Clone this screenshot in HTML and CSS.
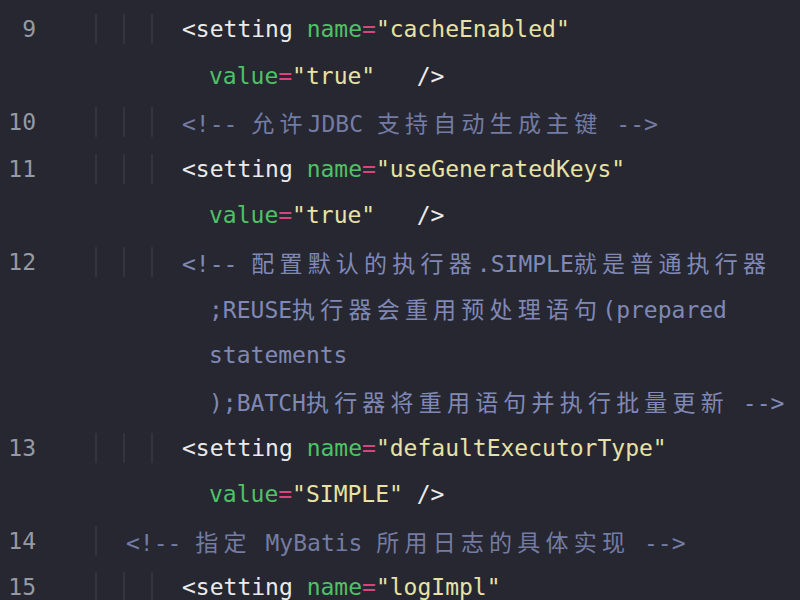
FILE: index.html
```html
<!DOCTYPE html>
<html lang="zh-CN">
<head>
<meta charset="utf-8">
<title>mybatis-config.xml</title>
<link rel="stylesheet" href="styles.css">
</head>
<body>
<div class="editor">
  <div class="row"><span class="ln">9</span><span class="indent"><i class="g"></i><i class="g"></i><i class="g"></i></span><span class="code"><span class="tag">&lt;setting</span> <span class="attr">name</span><span class="eq">=</span><span class="str">"cacheEnabled"</span></span></div>
  <div class="row"><span class="ln"></span><span class="indent"><i class="g off"></i><i class="g off"></i><i class="g off"></i></span><span class="code cont"><span class="attr">value</span><span class="eq">=</span><span class="str">"true"</span>   <span class="tag">/&gt;</span></span></div>
  <div class="row"><span class="ln">10</span><span class="indent"><i class="g"></i><i class="g"></i><i class="g"></i></span><span class="code cmt">&lt;!-- <span class="cjk">允许</span>JDBC <span class="cjk">支持自动生成主键</span> --&gt;</span></div>
  <div class="row"><span class="ln">11</span><span class="indent"><i class="g"></i><i class="g"></i><i class="g"></i></span><span class="code"><span class="tag">&lt;setting</span> <span class="attr">name</span><span class="eq">=</span><span class="str">"useGeneratedKeys"</span></span></div>
  <div class="row"><span class="ln"></span><span class="indent"><i class="g off"></i><i class="g off"></i><i class="g off"></i></span><span class="code cont"><span class="attr">value</span><span class="eq">=</span><span class="str">"true"</span>   <span class="tag">/&gt;</span></span></div>
  <div class="row"><span class="ln">12</span><span class="indent"><i class="g"></i><i class="g"></i><i class="g"></i></span><span class="code cmt bright">&lt;!-- <span class="cjk">配置默认的执行器</span>.SIMPLE<span class="cjk">就是普通执行器</span></span></div>
  <div class="row"><span class="ln"></span><span class="indent"><i class="g off"></i><i class="g off"></i><i class="g off"></i></span><span class="code cont cmt bright">;REUSE<span class="cjk">执行器会重用预处理语句</span>(prepared</span></div>
  <div class="row"><span class="ln"></span><span class="indent"><i class="g off"></i><i class="g off"></i><i class="g off"></i></span><span class="code cont cmt bright">statements</span></div>
  <div class="row"><span class="ln"></span><span class="indent"><i class="g off"></i><i class="g off"></i><i class="g off"></i></span><span class="code cont cmt bright">);BATCH<span class="cjk">执行器将重用语句并执行批量更新</span> --&gt;</span></div>
  <div class="row"><span class="ln">13</span><span class="indent"><i class="g"></i><i class="g"></i><i class="g"></i></span><span class="code"><span class="tag">&lt;setting</span> <span class="attr">name</span><span class="eq">=</span><span class="str">"defaultExecutorType"</span></span></div>
  <div class="row"><span class="ln"></span><span class="indent"><i class="g off"></i><i class="g off"></i><i class="g off"></i></span><span class="code cont"><span class="attr">value</span><span class="eq">=</span><span class="str">"SIMPLE"</span> <span class="tag">/&gt;</span></span></div>
  <div class="row"><span class="ln">14</span><span class="indent"><i class="g"></i></span><span class="code cmt">&lt;!-- <span class="cjk">指定</span> MyBatis <span class="cjk">所用日志的具体实现</span> --&gt;</span></div>
  <div class="row"><span class="ln">15</span><span class="indent"><i class="g"></i><i class="g"></i><i class="g"></i></span><span class="code"><span class="tag">&lt;setting</span> <span class="attr">name</span><span class="eq">=</span><span class="str">"logImpl"</span></span></div>
</div>
</body>
</html>
```
FILE: styles.css
```css
html, body {
  margin: 0;
  padding: 0;
  background: #262731;
}

.editor {
  width: 800px;
  height: 600px;
  overflow: hidden;
  padding-top: 6px;
  box-sizing: border-box;
  font-family: "DejaVu Sans Mono", "Noto Sans CJK SC", monospace;
  font-size: 23px;
  color: #e6e6e6;
}

.row {
  display: flex;
  align-items: center;
  height: 46.5px;
  white-space: pre;
}

.ln {
  width: 36px;
  flex: none;
  text-align: right;
  color: #959aa5;
  margin-right: 59px;
}

.indent {
  display: flex;
  flex: none;
  height: 30px;
}

.g {
  display: block;
  width: 26px;
  height: 30px;
  border-left: 2px solid #32343f;
}

.g.off {
  border-left-color: transparent;
}

.code {
  padding-left: 3px;
}

.code.cont {
  padding-left: 30px;
}

.tag { color: #ebebeb; }
.attr { color: #4fc166; }
.eq { color: #d8457d; }
.str { color: #e8e2a4; }

.cmt { color: #747ca3; }
.cmt.bright { color: #8089b6; }

.cjk {
  font-family: "Noto Sans CJK SC", sans-serif;
  letter-spacing: 5.2px;
}
```
